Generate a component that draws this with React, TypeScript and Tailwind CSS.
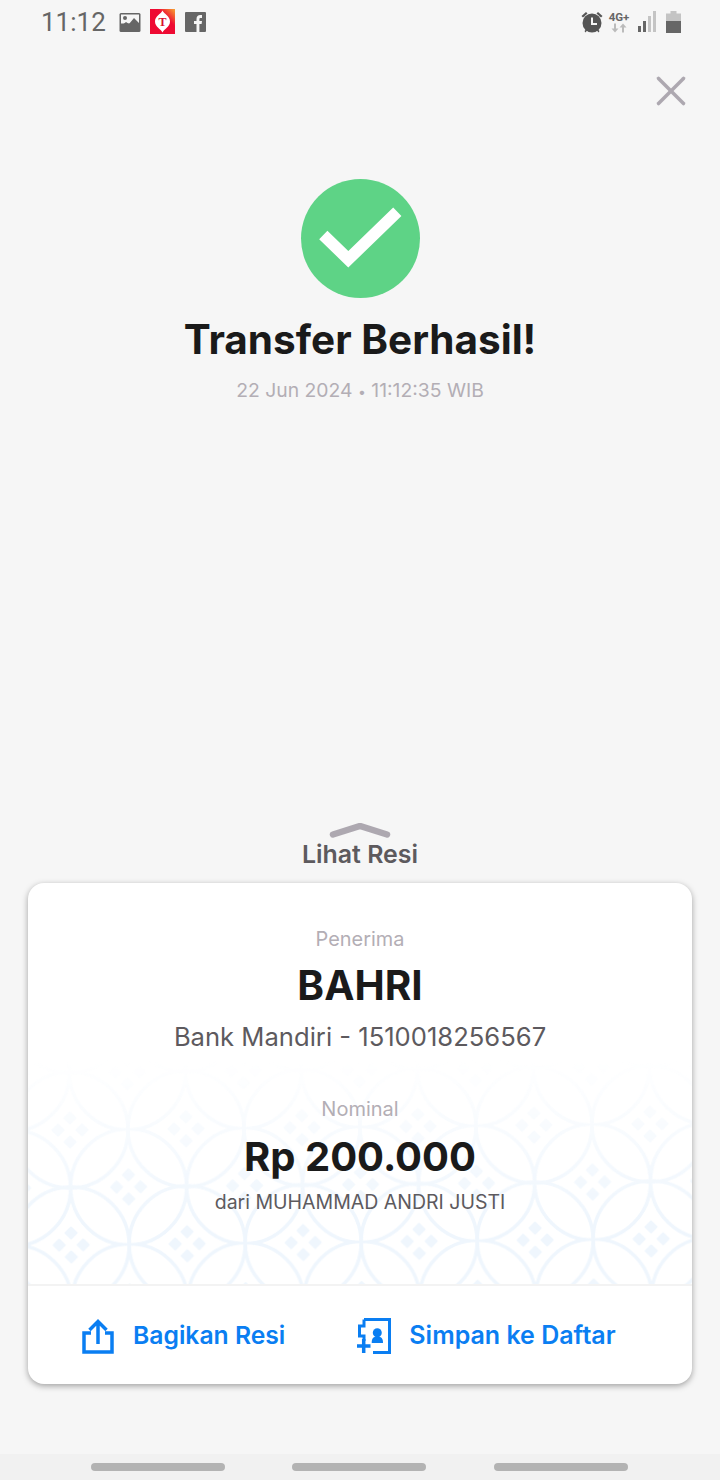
import { X } from "lucide-react";

const font = "font-['Inter',sans-serif]";

function StatusBar() {
  return (
    <div className="flex h-[46px] items-center pb-[3px] pl-[41px] pr-[39px] text-[#666]">
      <span className="font-['Roboto',sans-serif] text-[26px] leading-none text-[#666]">11:12</span>
      <svg width="22" height="22" viewBox="0 0 22 22" className="ml-[13px]">
        <rect x="0.5" y="2" width="21" height="19" rx="1.5" fill="#666" />
        <rect x="2" y="3.5" width="18" height="9" fill="#f6f6f6" />
        <circle cx="6" cy="7" r="2" fill="#666" />
        <path d="M2 15l5-4 3 2 5-6 5 5v6H2z" fill="#666" />
      </svg>
      <svg width="25" height="25" viewBox="0 0 25 25" className="ml-[9px]">
        <defs>
          <linearGradient id="tk" x1="0" y1="1" x2="1" y2="0">
            <stop offset="0.65" stopColor="#ee0a32" />
            <stop offset="1" stopColor="#f7a531" />
          </linearGradient>
        </defs>
        <rect width="25" height="25" fill="url(#tk)" />
        <path d="M12.5 1.5C14 5 20 7 20 12.5S14 20 12.5 23.5C11 20 5 18 5 12.5S11 5 12.5 1.5z" fill="#fff" />
        <text x="12.5" y="17" textAnchor="middle" fontSize="12" fontWeight="700" fontFamily="Liberation Serif, serif" fill="#d8102e">T</text>
      </svg>
      <svg width="21" height="21" viewBox="0 0 21 21" className="ml-[10px]">
        <rect x="0" y="1" width="21" height="20" rx="1" fill="#666" />
        <path d="M11.5 21v-8H9v-3h2.5V8c0-2.6 1.5-4 3.8-4H17v3h-1.4c-.9 0-1.2.5-1.2 1.2V10H17l-.4 3h-2.2v8z" fill="#f6f6f6" />
      </svg>
      <div className="ml-auto flex items-center">
        <svg width="24" height="24" viewBox="0 0 24 24">
          <circle cx="12" cy="13" r="9.5" fill="#555" />
          <path d="M11 7.5h2V13h4v2h-6z" fill="#f6f6f6" />
          <path d="M1.5 6L6 2l1.5 1.5L3 7.5zM22.5 6L18 2l-1.5 1.5L21 7.5zM4.5 21l2-2 1 1-2 2.5zM19.5 21l-2-2-1 1 2 2.5z" fill="#555" />
        </svg>
        <div className="ml-[4px] flex w-[22px] flex-col items-center">
          <span className="font-['Roboto',sans-serif] text-[11.5px] font-bold leading-[12px] text-[#666]">4G+</span>
          <svg width="16" height="10" viewBox="0 0 16 10">
            <path d="M4 9.5L.5 5.5H3V.5h2v5h2.5zM12 .5l3.5 4H13v5h-2v-5H8.500z" fill="#bbb" />
          </svg>
        </div>
        <svg width="19" height="21" viewBox="0 0 19 21" className="ml-[8px]">
          <rect x="0" y="15" width="3" height="6" fill="#666" />
          <rect x="5" y="10" width="3" height="11" fill="#666" />
          <rect x="10" y="5" width="3" height="16" fill="#c4c4c4" />
          <rect x="15" y="0" width="3" height="21" fill="#c4c4c4" />
        </svg>
        <svg width="15" height="22" viewBox="0 0 15 22" className="ml-[9px]">
          <path d="M4.500 0h6v2.500H15V22H0V2.500h4.500z" fill="#c4c4c4" />
          <rect x="0" y="10" width="15" height="12" fill="#666" />
        </svg>
      </div>
    </div>
  );
}

function Kawung() {
  return (
    <svg className="absolute inset-x-0 top-[177px] h-[224px] w-full" aria-hidden="true">
      <defs>
        <pattern
          id="kawung"
          x="42"
          y="-45"
          width="116"
          height="115"
          patternUnits="userSpaceOnUse"
          patternTransform="rotate(-0.6 42 70)"
        >
          {[
            [0, 0],
            [116, 0],
            [0, 115],
            [116, 115],
            [58, 57.5],
          ].map(([cx, cy]) => (
            <g key={`${cx}-${cy}`}>
              <circle cx={cx} cy={cy} r="58" fill="none" stroke="#eff6fd" strokeWidth="3.500" />
              <path
                d={`M${cx} ${cy - 17.5}l5.500 5.500-5.500 5.500-5.500-5.500zM${cx} ${cy + 6.5}l5.500 5.500-5.500 5.500-5.500-5.500zM${cx - 12} ${cy - 5.5}l5.500 5.500-5.500 5.500-5.500-5.500zM${cx + 12} ${cy - 5.5}l5.500 5.500-5.500 5.500-5.500-5.500z`}
                fill="#eff6fd"
                stroke="#eff6fd"
                strokeWidth="2"
                strokeLinejoin="round"
              />
            </g>
          ))}
        </pattern>
        <linearGradient id="fade" x1="0" y1="0" x2="0" y2="1">
          <stop offset="0" stopColor="#fff" stopOpacity="0" />
          <stop offset="0.7" stopColor="#fff" stopOpacity="1" />
        </linearGradient>
        <mask id="fadeMask">
          <rect width="100%" height="100%" fill="url(#fade)" />
        </mask>
      </defs>
      <rect width="100%" height="100%" fill="url(#kawung)" mask="url(#fadeMask)" />
    </svg>
  );
}

export default function App() {
  return (
    <div className={`flex h-[1480px] w-[720px] flex-col overflow-hidden bg-[#f6f6f6] ${font}`}>
      <StatusBar />

      <div className="flex justify-end pr-[24px] pt-[20px]">
        <X size={50} strokeWidth={1.7} className="text-[#ada8b0]" />
      </div>

      <div className="mt-[63px] flex flex-col items-center">
        <svg width="119" height="119" viewBox="0 0 119 119" fill="none">
          <circle cx="59.500" cy="59.500" r="59.500" fill="#5ed386" />
          <path d="M22.300 56L47.300 80.300 96.300 32.700" stroke="#fff" strokeWidth="11.800" />
        </svg>
        <h1 className="mt-[18px] text-[40.500px] font-bold leading-[47px] text-[#1a1a1a]">Transfer Berhasil!</h1>
        <p className="mt-[14px] text-[19.350px] leading-[26px] text-[#b3aeb5]">
          22 Jun 2024 <span className="text-[14px]">•</span> 11:12:35 WIB
        </p>
      </div>

      <div className="mt-[418px] flex flex-col items-center">
        <svg width="62" height="16" viewBox="0 0 62 16" fill="none">
          <path d="M4 11.500L31 3l27 8.500" stroke="#ada8b0" strokeWidth="6.500" strokeLinecap="round" strokeLinejoin="round" />
        </svg>
        <span className="text-[24.900px] font-semibold leading-[30px] text-[#5d5a5e]">Lihat Resi</span>
      </div>

      <div className="relative mx-[28px] mt-[14px] h-[501px] overflow-hidden rounded-[16px] bg-white shadow-[0_2px_6px_rgba(0,0,0,0.35)]">
        <Kawung />
        <div className="relative flex h-[403px] flex-col items-center border-b-2 border-[#f3f3f3] pt-[44px] text-center">
          <span className="text-[19.900px] leading-[24px] text-[#b3aeb5]">Penerima</span>
          <span className="mt-[11px] text-[40.500px] font-bold leading-[48px] text-[#1a1a1a]">BAHRI</span>
          <span className="mt-[10px] text-[25.600px] leading-[34px] text-[#5d5a5e]">Bank Mandiri - 1510018256567</span>
          <span className="mt-[43px] text-[20px] leading-[24px] text-[#b3aeb5]">Nominal</span>
          <span className="mt-[12px] text-[40px] font-bold leading-[48px] text-[#1a1a1a]">Rp 200.000</span>
          <span className="mt-[8px] text-[19.500px] leading-[26px] text-[#5d5a5e]">dari MUHAMMAD ANDRI JUSTI</span>
        </div>
        <div className="relative flex h-[98px] items-center pt-[2px] font-semibold text-[#0a7ef2]">
          <svg width="32" height="35" viewBox="0 0 32 35" fill="none" stroke="#0a7ef2" strokeWidth="3.500" className="ml-[54px]">
            <path d="M9 14H2v19h28V14h-7M16 25V3M7.500 11L16 2.500 24.500 11" />
          </svg>
          <span className="ml-[19px] text-[24.700px]">Bagikan Resi</span>
          <svg width="34" height="36" viewBox="0 0 34 36" fill="none" className="ml-[72px]">
            <path d="M7 1.500H32.500V34.500H16M7 1.500V8H2.500V18H7V23" stroke="#0a7ef2" strokeWidth="3" />
            <path d="M0 28h13.500M6.700 21v14" stroke="#0a7ef2" strokeWidth="3.500" />
            <circle cx="20.300" cy="14.700" r="4.500" fill="#0a7ef2" />
            <path d="M14.700 25c0-4 1-6.500 5.600-6.500s5.700 2.500 5.700 6.500z" fill="#0a7ef2" />
          </svg>
          <span className="ml-[18px] text-[25px]">Simpan ke Daftar</span>
        </div>
      </div>

      <div className="mt-auto flex h-[26px] items-start bg-[#f1f1f1] pl-[91px] pt-[9px]">
        <div className="h-[8px] w-[134px] rounded-full bg-[#b3b3b3]" />
        <div className="ml-[67px] h-[8px] w-[134px] rounded-full bg-[#b3b3b3]" />
        <div className="ml-[68px] h-[8px] w-[134px] rounded-full bg-[#b3b3b3]" />
      </div>
    </div>
  );
}
